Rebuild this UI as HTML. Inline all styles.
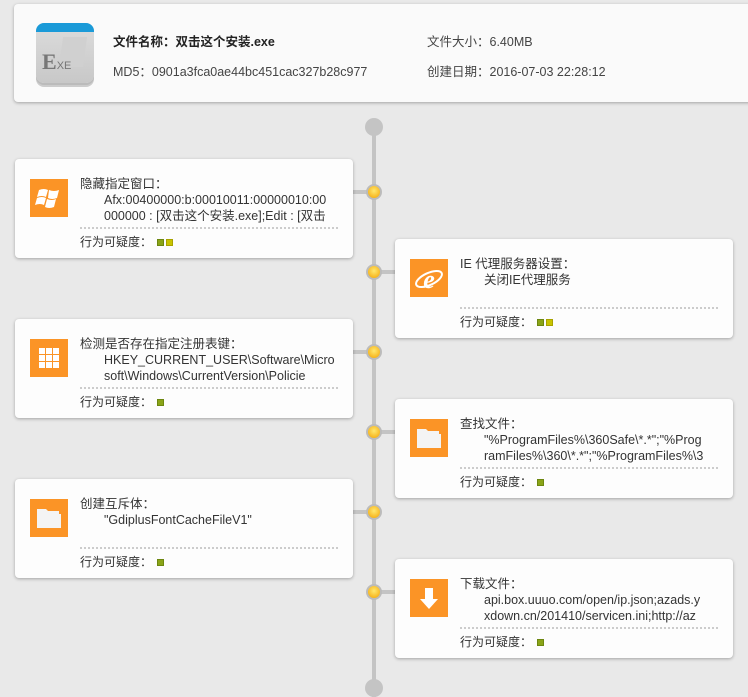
<!DOCTYPE html>
<html><head><meta charset="utf-8"><style>
*{margin:0;padding:0;box-sizing:border-box}
body{width:748px;height:688px;background:#e9e9e9;position:relative;overflow:hidden;font-family:"Liberation Sans","Noto Sans CJK SC",sans-serif;font-size:12px;color:#333}
.hdr{position:absolute;left:14px;top:4px;width:750px;height:98px;background:#fafafa;border-radius:4px;box-shadow:0 1px 3px rgba(0,0,0,.3)}
.t{position:absolute;font-size:12.5px;white-space:nowrap}
.line{position:absolute;left:372px;top:127px;width:4px;height:570px;background:#c4c4c4}
.big{position:absolute;width:18px;height:18px;border-radius:50%;background:#c4c4c4}
.card{position:absolute;width:338px;height:99px;background:#fdfdfd;border-radius:4px;box-shadow:0 1px 3px rgba(0,0,0,.3)}
.ic{position:absolute;left:15px;top:20px;width:38px;height:38px;background:#fb9426}
.tx{position:absolute;left:65px;top:17px;line-height:16px;width:270px;white-space:nowrap;font-size:12.5px}
.tx div{padding-left:24px}
.dot{position:absolute;left:65px;top:68px;width:258px;border-top:2px dotted #ccc}
.rt{position:absolute;left:65px;top:75px;line-height:16px}
.sq{display:inline-block;width:7px;height:7px;margin-left:2px;background:#8aa417;border:1px solid #6d8710;vertical-align:0}
.sq.y{background:#c9c400;border-color:#a8a300}
.con{position:absolute;height:4px;width:20px;background:#c4c4c4}
.nd{position:absolute;width:16px;height:16px;border-radius:50%;background:#bbb}
.nd:after{content:"";position:absolute;left:2px;top:2px;width:12px;height:12px;border-radius:50%;background:radial-gradient(circle at 50% 40%,#ffe870,#f4a300)}
</style></head><body>
<div class="hdr">
 <div style="position:absolute;left:22px;top:19px;width:58px;height:60px;border-radius:8px;background:linear-gradient(#dcdcdc,#c8c8c8);box-shadow:0 2px 0 #bbb,0 4px 0 #ccc">
  <div style="position:absolute;left:0;top:0;width:58px;height:9px;background:#1a9ad8;border-radius:8px 8px 0 0"></div>
  <div style="position:absolute;left:25px;top:14px;width:24px;height:30px;background:#d0d0d0;transform:skew(-8deg)"></div>
  <div style="position:absolute;left:6px;top:26px;font-family:'Liberation Serif',serif;font-weight:bold;font-size:22px;color:#777">E<span style="font-family:'Liberation Sans';font-weight:normal;font-size:11px">XE</span></div>
 </div>
 <div class="t" style="left:99px;top:27px;font-weight:bold;color:#222">文件名称：双击这个安装.exe</div>
 <div class="t" style="left:99px;top:57px;color:#444">MD5：0901a3fca0ae44bc451cac327b28c977</div>
 <div class="t" style="left:413px;top:27px;color:#444">文件大小：6.40MB</div>
 <div class="t" style="left:413px;top:57px;color:#444">创建日期：2016-07-03 22:28:12</div>
</div>
<div class="line"></div>
<div class="big" style="left:365px;top:118px"></div>
<div class="big" style="left:365px;top:679px"></div>

<div class="con" style="left:353px;top:190px"></div><div class="nd" style="left:366px;top:184px"></div>
<div class="con" style="left:376px;top:270px"></div><div class="nd" style="left:366px;top:264px"></div>
<div class="con" style="left:353px;top:350px"></div><div class="nd" style="left:366px;top:344px"></div>
<div class="con" style="left:376px;top:430px"></div><div class="nd" style="left:366px;top:424px"></div>
<div class="con" style="left:353px;top:510px"></div><div class="nd" style="left:366px;top:504px"></div>
<div class="con" style="left:376px;top:590px"></div><div class="nd" style="left:366px;top:584px"></div>

<div class="card" style="left:15px;top:159px">
 <div class="ic"><svg width="38" height="38" viewBox="0 0 38 38"><path d="M9 11q5-2 9 0l-2 7q-4-2-9 0zM19 11q5 2 10 0l-2 8q-5 2-9 0zM7 19q5-2 9 0l-2 7q-4-2-9 0zM17 20q5 2 9 0l-2 8q-5 2-9 0z" fill="#fff"/></svg></div>
 <div class="tx">隐藏指定窗口：<div>Afx:00400000:b:00010011:00000010:00<br>000000 : [双击这个安装.exe];Edit : [双击</div></div>
 <div class="dot"></div><div class="rt">行为可疑度： <span class="sq"></span><span class="sq y"></span></div>
</div>
<div class="card" style="left:395px;top:239px">
 <div class="ic"><svg width="38" height="38" viewBox="0 0 38 38"><text x="19" y="29" font-family="Liberation Serif" font-style="italic" font-weight="bold" font-size="26" fill="#fff" text-anchor="middle">e</text><ellipse cx="19" cy="20" rx="14" ry="6" fill="none" stroke="#fff" stroke-width="2" transform="rotate(-25 19 20)"/></svg></div>
 <div class="tx">IE 代理服务器设置：<div>关闭IE代理服务</div></div>
 <div class="dot"></div><div class="rt">行为可疑度： <span class="sq"></span><span class="sq y"></span></div>
</div>
<div class="card" style="left:15px;top:319px">
 <div class="ic"><svg width="38" height="38" viewBox="0 0 38 38" fill="#fff"><rect x="9" y="9" width="6" height="6"/><rect x="16" y="9" width="6" height="6"/><rect x="23" y="9" width="6" height="6"/><rect x="9" y="16" width="6" height="6"/><rect x="16" y="16" width="6" height="6"/><rect x="23" y="16" width="6" height="6"/><rect x="9" y="23" width="6" height="6"/><rect x="16" y="23" width="6" height="6"/><rect x="23" y="23" width="6" height="6"/></svg></div>
 <div class="tx">检测是否存在指定注册表键：<div>HKEY_CURRENT_USER\Software\Micro<br>soft\Windows\CurrentVersion\Policie</div></div>
 <div class="dot"></div><div class="rt">行为可疑度： <span class="sq"></span></div>
</div>
<div class="card" style="left:395px;top:399px">
 <div class="ic"><svg width="38" height="38" viewBox="0 0 38 38" fill="#f4f4f4"><path d="M7 10h9l2 2h11v4H7z"/><rect x="7" y="15" width="24" height="14"/></svg></div>
 <div class="tx">查找文件：<div>"%ProgramFiles%\360Safe\*.*";"%Prog<br>ramFiles%\360\*.*";"%ProgramFiles%\3</div></div>
 <div class="dot"></div><div class="rt">行为可疑度： <span class="sq"></span></div>
</div>
<div class="card" style="left:15px;top:479px">
 <div class="ic"><svg width="38" height="38" viewBox="0 0 38 38" fill="#f4f4f4"><path d="M7 10h9l2 2h11v4H7z"/><rect x="7" y="15" width="24" height="14"/></svg></div>
 <div class="tx">创建互斥体：<div>"GdiplusFontCacheFileV1"</div></div>
 <div class="dot"></div><div class="rt">行为可疑度： <span class="sq"></span></div>
</div>
<div class="card" style="left:395px;top:559px">
 <div class="ic"><svg width="38" height="38" viewBox="0 0 38 38" fill="#fff"><path d="M15 9h8v11h5l-9 10-9-10h5z"/></svg></div>
 <div class="tx">下载文件：<div>api.box.uuuo.com/open/ip.json;azads.y<br>xdown.cn/201410/servicen.ini;http://az</div></div>
 <div class="dot"></div><div class="rt">行为可疑度： <span class="sq"></span></div>
</div>
</body></html>
